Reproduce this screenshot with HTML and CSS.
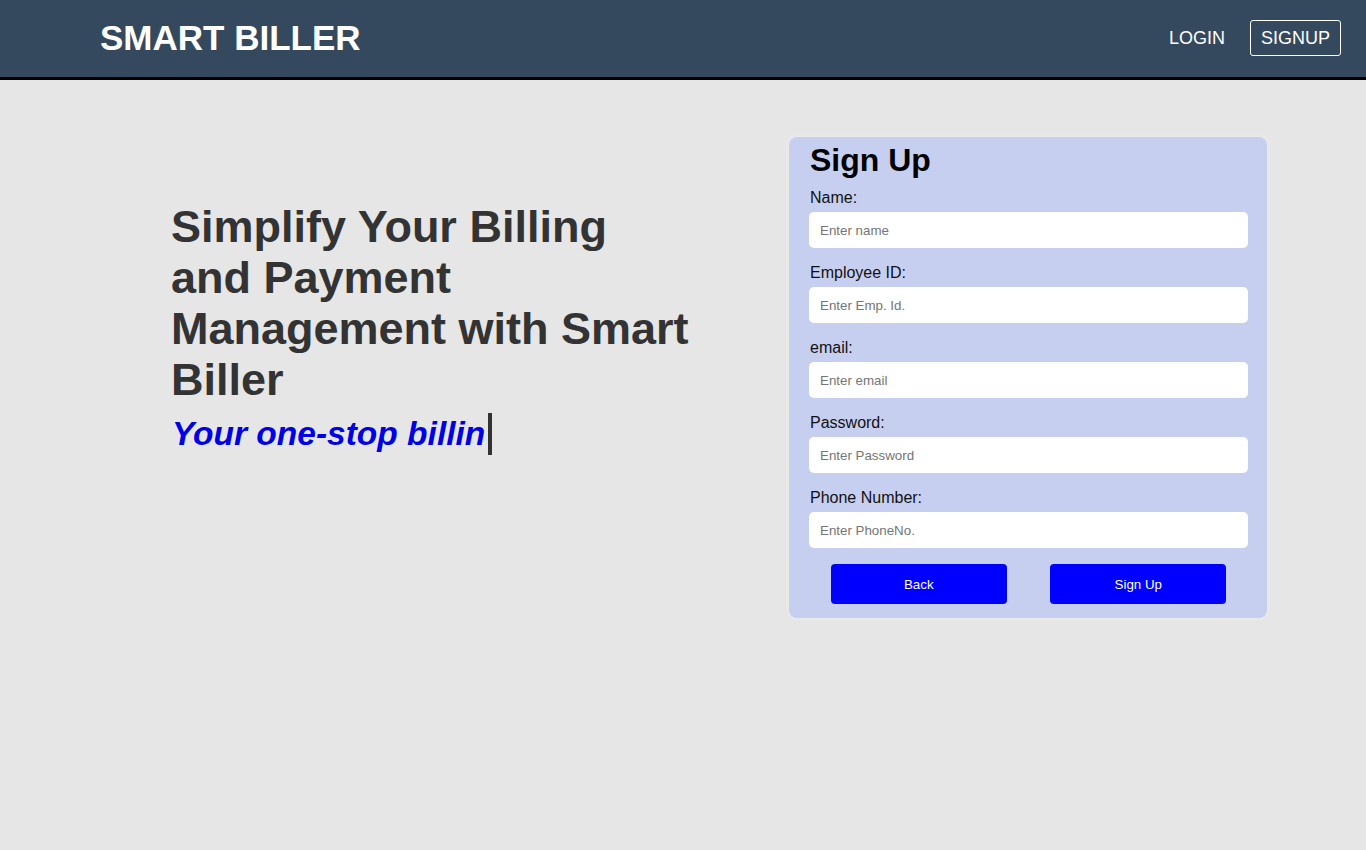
FILE: index.html
```html
<!DOCTYPE html>
<html lang="en">
<head>
<meta charset="utf-8">
<title>Smart Biller - Sign Up</title>
<link rel="stylesheet" href="styles.css">
</head>
<body>
<header class="topbar">
  <div class="brand">SMART BILLER</div>
  <nav class="nav">
    <a class="nav-link" href="#">LOGIN</a>
    <a class="nav-link nav-link--boxed" href="#">SIGNUP</a>
  </nav>
</header>
<main class="main">
  <section class="hero">
    <h1 class="hero-title">Simplify Your Billing and Payment Management with Smart Biller</h1>
    <p class="hero-sub"><span class="typed">Your one-stop billin</span></p>
  </section>
  <form class="card">
    <h2 class="card-title">Sign Up</h2>
    <label class="field-label" for="name">Name:</label>
    <input class="field-input" id="name" type="text" placeholder="Enter name">
    <label class="field-label" for="emp">Employee ID:</label>
    <input class="field-input" id="emp" type="text" placeholder="Enter Emp. Id.">
    <label class="field-label" for="email">email:</label>
    <input class="field-input" id="email" type="text" placeholder="Enter email">
    <label class="field-label" for="pw">Password:</label>
    <input class="field-input" id="pw" type="text" placeholder="Enter Password">
    <label class="field-label" for="phone">Phone Number:</label>
    <input class="field-input" id="phone" type="text" placeholder="Enter PhoneNo.">
    <div class="actions">
      <button class="btn" type="button">Back</button>
      <button class="btn" type="button">Sign Up</button>
    </div>
  </form>
</main>
</body>
</html>
```
FILE: styles.css
```css
* { box-sizing: border-box; }
html, body { margin: 0; padding: 0; }
body {
  background: #e6e6e6;
  font-family: "Liberation Sans", Arial, sans-serif;
  min-height: 850px;
}
.topbar {
  height: 80px;
  background: #34495e;
  border-bottom: 3px solid #000;
  display: flex;
  align-items: center;
  justify-content: space-between;
  padding: 0 25px 0 100px;
}
.brand {
  color: #fff;
  font-weight: bold;
  font-size: 35px;
  margin-top: -2px;
}
.nav {
  display: flex;
  align-items: center;
  gap: 14px;
  margin-top: -2px;
}
.nav-link {
  color: #fff;
  text-decoration: none;
  font-size: 18px;
  padding: 7px 10px;
  border: 1px solid transparent;
  border-radius: 3px;
  line-height: 20px;
}
.nav-link--boxed { border-color: #fff; }
.main {
  display: flex;
  align-items: flex-start;
  padding: 57px 0 0 171px;
  gap: 98px;
}
.hero {
  width: 520px;
  margin-top: 64px;
}
.hero-title {
  margin: 0;
  font-size: 45px;
  line-height: 51px;
  font-weight: bold;
  color: #333;
}
.hero-sub {
  margin: 8px 0 0 0;
  font-size: 33.5px;
  line-height: 42px;
  font-weight: bold;
  font-style: italic;
  color: #0000e6;
  padding-left: 1px;
}
.typed {
  border-right: 4px solid #333;
  padding-right: 3px;
  display: inline-block;
  line-height: 42px;
}
.card {
  width: 478px;
  background: #c7cff0;
  border-radius: 8px;
  box-shadow: 0 0 4px rgba(255, 255, 255, 0.45);
  padding: 5px 19px 14px 20px;
  display: flex;
  flex-direction: column;
}
.card-title {
  margin: 0 0 10px 1px;
  font-size: 32px;
  line-height: 37px;
  color: #000;
}
.field-label {
  font-size: 16px;
  line-height: 18px;
  color: #111;
  margin: 0 0 5px 1px;
}
.field-input {
  height: 36px;
  border: none;
  border-radius: 5px;
  background: #fff;
  padding: 0 11px;
  font-family: "Liberation Sans", Arial, sans-serif;
  font-size: 13.33px;
  margin: 0 0 16px 0;
  outline: none;
}
.field-input::placeholder { color: #757575; }
.actions {
  display: flex;
  justify-content: space-around;
}
.btn {
  width: 40%;
  height: 40px;
  border: none;
  border-radius: 4px;
  background: #0000ff;
  color: #fff;
  font-family: "Liberation Sans", Arial, sans-serif;
  font-size: 13.33px;
}
```
